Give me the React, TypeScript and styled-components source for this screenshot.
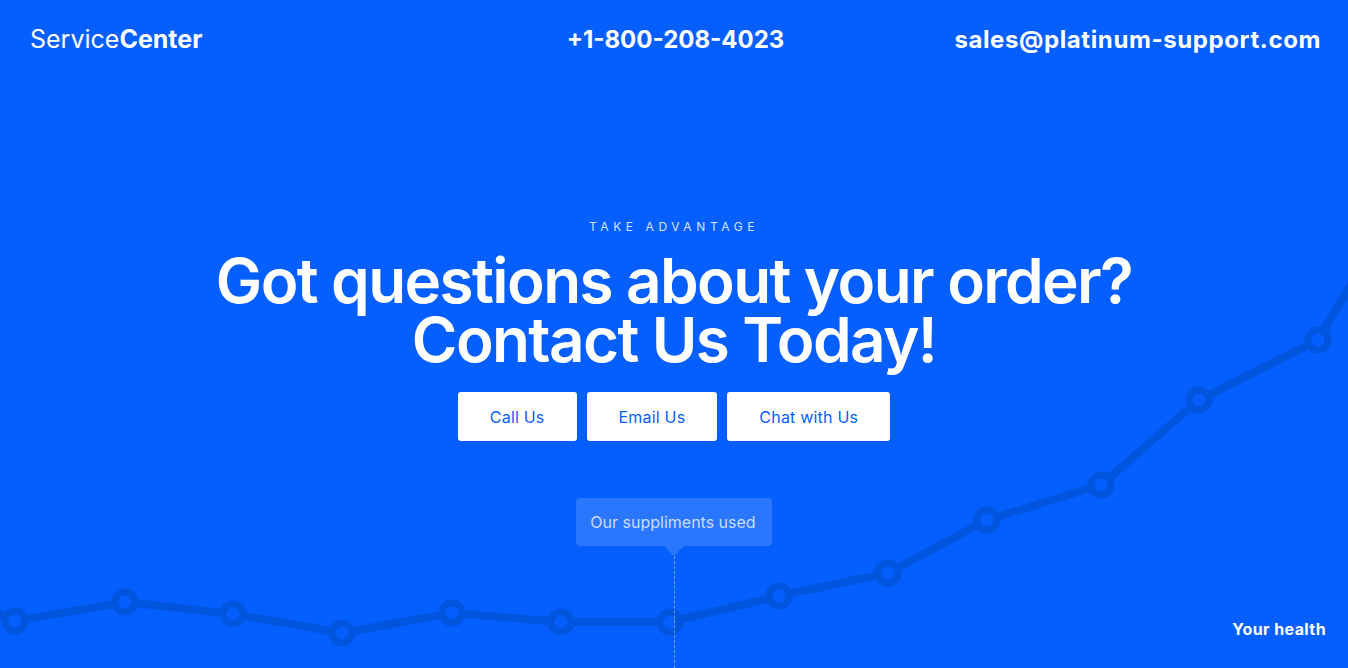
import React from "react";
import styled, { createGlobalStyle } from "styled-components";

const GlobalStyle = createGlobalStyle`
  * {
    box-sizing: border-box;
  }

  body {
    margin: 0;
    background: #055fff;
    font-family: Inter, "Noto Sans", sans-serif;
    color: #ffffff;
  }
`;

// chart points across the whole page
const points: [number, number][] = [
  [15, 621],
  [125, 602],
  [233, 614],
  [342, 633],
  [452, 613],
  [561, 622],
  [670, 622],
  [779, 596],
  [888, 573],
  [987, 520],
  [1101, 485],
  [1199, 400],
  [1318, 340],
];

const App = () => {
  const line = [[-40, 598], ...points, [1380, 236]]
    .map(([x, y]) => `${x},${y}`)
    .join(" ");

  return (
    <Page>
      <GlobalStyle />
      <Chart viewBox="0 0 1348 668" preserveAspectRatio="none">
        <polyline
          points={line}
          fill="none"
          stroke="#0055de"
          strokeWidth={8}
          strokeLinejoin="round"
        />
        {points.map(([x, y]) => (
          <circle
            key={x}
            cx={x}
            cy={y}
            r={10}
            fill="#055fff"
            stroke="#0055de"
            strokeWidth={7}
          />
        ))}
      </Chart>

      <Header>
        <Logo>
          Service<b>Center</b>
        </Logo>
        <Phone>+1-800-208-4023</Phone>
        <Email>sales@platinum-support.com</Email>
      </Header>

      <Hero>
        <Eyebrow>Take advantage</Eyebrow>
        <Heading>
          Got questions about your order?
          <br />
          Contact Us Today!
        </Heading>
        <Buttons>
          <Button>Call Us</Button>
          <Button>Email Us</Button>
          <Button>Chat with Us</Button>
        </Buttons>
        <Tooltip>Our suppliments used</Tooltip>
        <Guide />
      </Hero>

      <Label>Your health</Label>
    </Page>
  );
};

export default App;

const Page = styled.div`
  position: relative;
  display: flex;
  flex-direction: column;
  height: 100vh;
  overflow: hidden;
  background: #055fff;
`;

const Chart = styled.svg`
  position: absolute;
  inset: 0;
  width: 100%;
  height: 100%;
  pointer-events: none;
`;

const Header = styled.header`
  position: relative;
  display: grid;
  grid-template-columns: 1fr auto 1fr;
  align-items: center;

  height: 78px;
  padding: 0 27px 0 30px;

  font-size: 24px;
`;

const Logo = styled.div`
  font-size: 25px;
  font-weight: 400;
  letter-spacing: 0;

  b {
    font-weight: 700;
  }
`;

const Phone = styled.div`
  font-weight: 700;
`;

const Email = styled.div`
  justify-self: end;
  font-weight: 700;
  letter-spacing: 0.6px;
`;

const Hero = styled.main`
  position: relative;
  display: flex;
  flex-direction: column;
  align-items: center;
  flex: 1;

  padding-top: 141px;
  text-align: center;
`;

const Eyebrow = styled.div`
  color: rgba(255, 255, 255, 0.85);
  font-size: 12px;
  letter-spacing: 4.6px;
  text-transform: uppercase;
`;

const Heading = styled.h1`
  margin: 17px 0 0;

  font-size: 62px;
  font-weight: 600;
  line-height: 59px;
  letter-spacing: -1.6px;
`;

const Buttons = styled.div`
  display: flex;
  gap: 10px;
  margin-top: 23px;
`;

const Button = styled.button`
  height: 49px;
  padding: 0 32px;

  background: #ffffff;
  border: none;
  border-radius: 3px;

  color: #055fff;
  font-family: inherit;
  font-size: 16px;
  letter-spacing: 0.2px;
`;

const Tooltip = styled.div`
  position: relative;
  margin-top: 57px;
  padding: 13px 16px 13px 14px;

  background: rgba(255, 255, 255, 0.15);
  border-radius: 4px;

  color: rgba(255, 255, 255, 0.75);
  font-size: 16px;
  line-height: 22px;

  &::after {
    content: "";
    position: absolute;
    left: 50%;
    bottom: -10px;
    transform: translateX(-50%);
    border: 10px solid transparent;
    border-bottom: none;
    border-top-color: rgba(255, 255, 255, 0.15);
  }
`;

const Guide = styled.div`
  flex: 1;
  margin-top: 10px;
  border-left: 1px dashed rgba(255, 255, 255, 0.4);
`;

const Label = styled.div`
  position: absolute;
  right: 22px;
  bottom: 29px;

  font-size: 16px;
  font-weight: 700;
  letter-spacing: 0.4px;
`;
